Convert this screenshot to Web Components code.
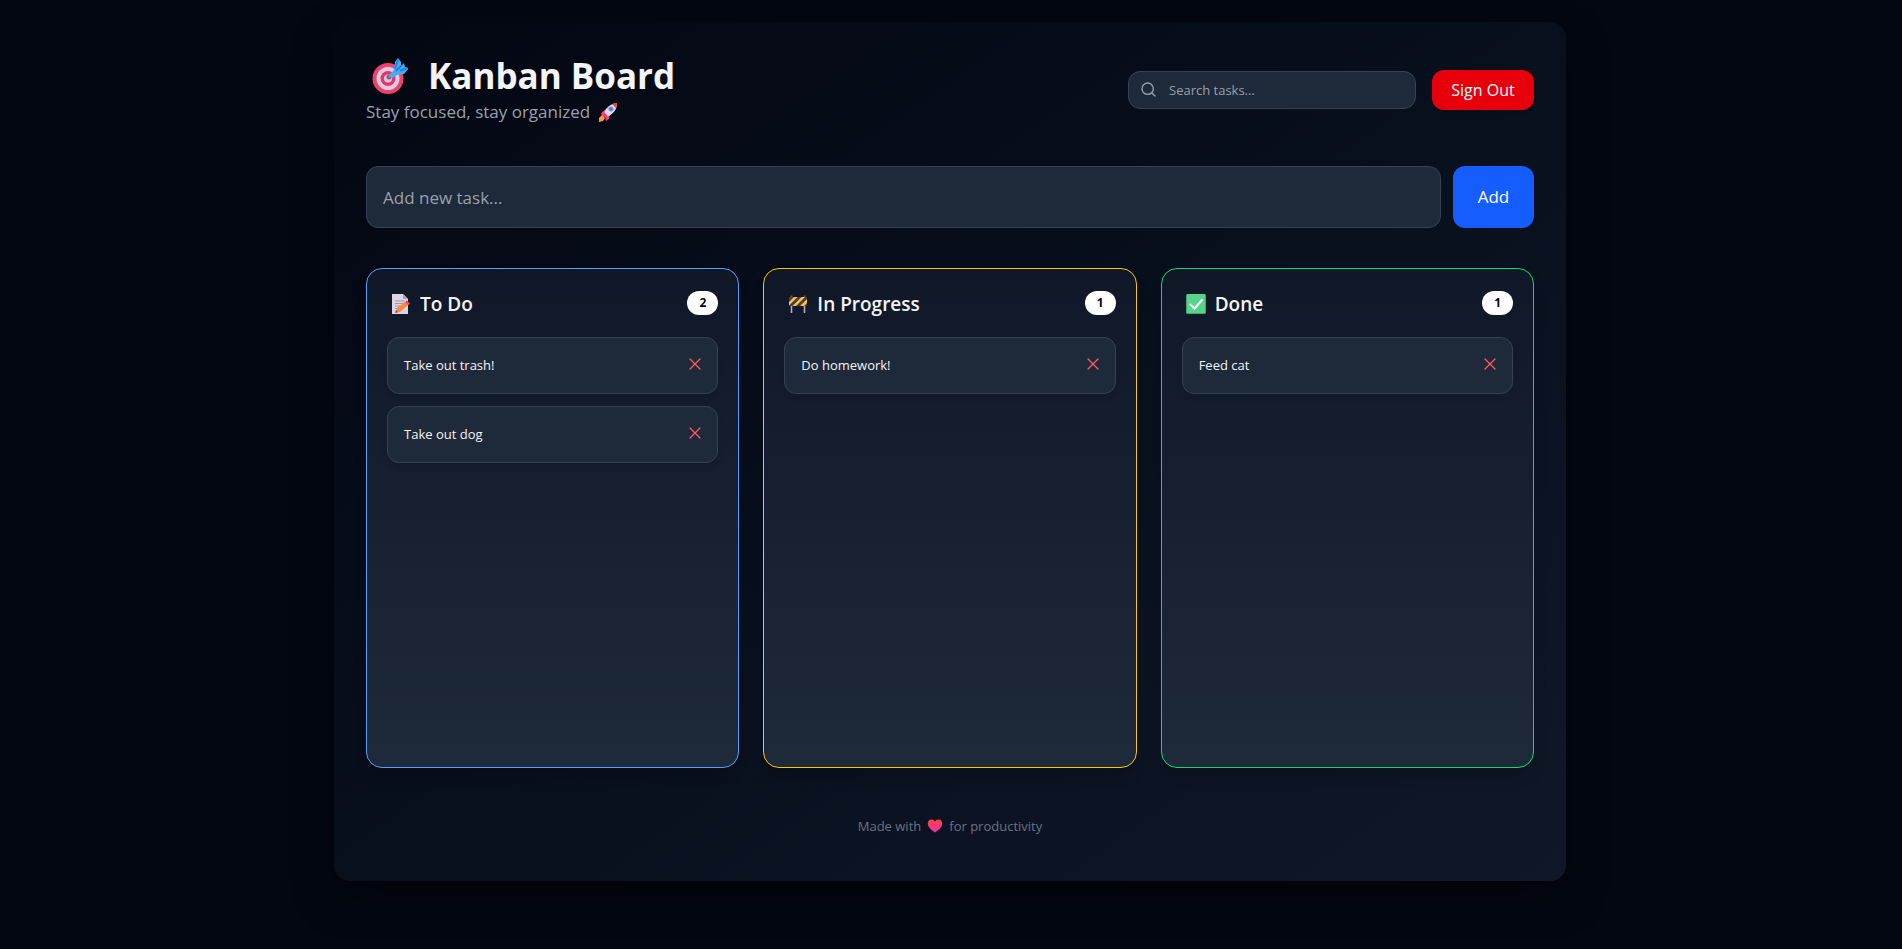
<!DOCTYPE html>
<html lang="en">
<head>
<meta charset="utf-8">
<meta name="viewport" content="width=device-width, initial-scale=1">
<title>Kanban Board</title>
<style>
html { background: #030712; }
body { margin: 0; padding: 22px 26px 68px 24px; font-family: "Open Sans", "Noto Sans", sans-serif; color: #f3f4f6; overflow-x: hidden; }
</style>
</head>
<body>
<kanban-app></kanban-app>
<script>
const icons = {
  target: `<svg viewBox="0 0 36 36"><circle cx="16" cy="20.500" r="15.500" fill="#f0406c"/><circle cx="16" cy="20.500" r="11.500" fill="#dccbe4"/><circle cx="16" cy="20.500" r="7.500" fill="#e83467"/><circle cx="16" cy="20.500" r="4" fill="#d8c9e2"/><circle cx="17" cy="19" r="2.500" fill="#7c6684"/><path d="M17 19 26 11" stroke="#8a9bb8" stroke-width="2"/><path d="M17 17l5-5 1-8 3-4 3 4v4l3-3 1 4 4 1-5 6-7 1-5 3z" fill="#42adf2"/><path d="M23 11l3-9M28 13l7-3" stroke="#2a82de" stroke-width="2" fill="none"/><path d="M24 13l6-6" stroke="#1f6fd0" stroke-width="1.500" fill="none"/></svg>`,
  rocket: `<svg viewBox="0 0 20 20"><path d="M3 11 8 7l4 4-1 6-3 2-1-4-3-1z" fill="#ef4283"/><path d="M6 12C7 6 12 2 19 1c0 7-4 11-10 14z" fill="#e6dced"/><path d="M14 2c2-.8 4-1 5-1 0 1-.2 3-1 5z" fill="#f03d52"/><circle cx="13" cy="7" r="2.300" fill="#3f86e6" stroke="#a99cb8" stroke-width=".8"/><path d="M5 11l4 4" stroke="#f03d78" stroke-width="2.500"/><path d="M1 16l3-3 3 3-2 3-4 1z" fill="#ff9a34"/></svg>`,
  memo: `<svg viewBox="0 0 20 20"><path d="M1 0h11l5 5v15H1z" fill="#ddd4e5"/><path d="M12 0l5 5h-5z" fill="#a99fb8"/><path d="M4 7h10M4 9.500h10M4 12h8M4 14.500h4" stroke="#9f96ad" stroke-width="1"/><path d="M5 18l1-4 8-6 3 3-8 7-4 1z" fill="#ff8a3c"/><path d="M14 8l2-1.500 3 3-2 2z" fill="#f9484f"/><path d="M4 19l1-3 2 2z" fill="#7d5a55"/></svg>`,
  barrier: `<svg viewBox="0 0 20 20"><path d="M3.500 11v8M16.500 11v8" stroke="#b9a8c6" stroke-width="1.600"/><path d="M1 3h18v9H1z" fill="#4a3b4c"/><path d="M1 8l5-5h3.500L1 11.500zM4.500 12l9-9H17l-9 9zM12 12l7-7v4l-3 3z" fill="#fcc43c"/><path d="M3.500 1.500v1.500M16.500 1.500v1.500" stroke="#8c3a5c" stroke-width="2"/></svg>`,
  check: `<svg viewBox="0 0 20 20"><rect width="20" height="20" rx="1.500" fill="#3fa56f"/><rect x="1" y="0" width="18" height="19" rx="1" fill="#57d38c"/><path d="M4.500 10.500 8.500 14.500 16 6" fill="none" stroke="#fff" stroke-width="2" stroke-linecap="round"/></svg>`,
  heart: `<svg viewBox="0 0 16 14"><defs><linearGradient id="h" x2="0" y2="1"><stop stop-color="#fb4247"/><stop offset="1" stop-color="#f22fa6"/></linearGradient></defs><path d="M8 13.500C3 10 .8 7.500.8 4.500.8 2 2.500.6 4.500.6 6 .6 7.300 1.300 8 2.600 8.700 1.300 10 .6 11.500.6c2 0 3.700 1.400 3.700 3.900 0 3-2.200 5.500-7.200 9z" fill="url(#h)"/></svg>`,
  search: `<svg viewBox="0 0 24 24" fill="none" stroke="#99a1af" stroke-width="2" stroke-linecap="round" stroke-linejoin="round"><circle cx="10" cy="10" r="8.500"/><path d="m21 21-4.500-4.500"/></svg>`,
  close: `<svg viewBox="0 0 12 12" stroke="#ff5b60" stroke-width="1.300" stroke-linecap="round"><path d="M1 1l10 10M11 1 1 11"/></svg>`
};
const base = `*{box-sizing:border-box;margin:0}svg{display:block;width:100%;height:100%}button,input{font-family:inherit}button{cursor:pointer;border:0}input::placeholder{color:#99a1af;opacity:1}`;

class Base extends HTMLElement {
  connectedCallback() {
    if (this.shadowRoot) return;
    this.attachShadow({ mode: "open" }).innerHTML = `<style>${base}${this.styles()}</style>${this.markup()}`;
  }
}

customElements.define("emoji-icon", class extends Base {
  styles() { return `:host{display:inline-block;flex:none}`; }
  markup() { return icons[this.getAttribute("name")]; }
});

customElements.define("board-header", class extends Base {
  styles() { return `
    :host{display:block}
    header{display:flex;align-items:center;justify-content:space-between;gap:24px;flex-wrap:wrap}
    h1{display:flex;align-items:center;font-size:35px;line-height:40px;font-weight:700;color:#f3f4f6;padding:2px 0 0 6px;gap:20px}
    h1 emoji-icon{width:36px;height:36px}
    p{display:flex;align-items:center;gap:8px;margin-top:2px;font-size:17px;line-height:28px;color:#99a1af}
    p emoji-icon{width:20px;height:20px}
    .actions{display:flex;align-items:center;gap:16px}
    label{display:flex;align-items:center;gap:12px;width:288px;height:38px;padding:0 12px;border:1px solid #364153;border-radius:12px;background:#1e2939}
    label svg{width:16px;height:16px;flex:none}
    input{flex:1;min-width:0;border:0;outline:0;padding:0;background:none;color:#fff;font-size:13px;line-height:20px}
    button{width:102px;height:40px;padding:0;border-radius:12px;background:#e7000b;color:#fff;font-size:16px;line-height:24px;box-shadow:0 1px 3px #0003}`; }
  markup() { return `<header><div><h1><emoji-icon name="target"></emoji-icon><span>Kanban Board</span></h1>
    <p><span>Stay focused, stay organized</span><emoji-icon name="rocket"></emoji-icon></p></div>
    <div class="actions"><label>${icons.search}<input type="text" aria-label="Search tasks" placeholder="Search tasks..."></label>
    <button type="button">Sign Out</button></div></header>`; }
});

customElements.define("task-form", class extends Base {
  styles() { return `
    :host{display:block}
    form{display:flex;gap:12px}
    input{flex:1;min-width:0;height:62px;padding:0 16px;border:1px solid #364153;border-radius:12px;background:#1e2939;color:#fff;font-size:17px;line-height:28px;outline:0}
    button{width:81px;padding:0;border-radius:12px;background:#155dfc;color:#fff;font-size:17px;line-height:28px;box-shadow:0 1px 3px #0003}`; }
  markup() { return `<form><input type="text" aria-label="New task" placeholder="Add new task..."><button type="button">Add</button></form>`; }
});

customElements.define("task-card", class extends Base {
  styles() { return `
    :host{display:flex;align-items:center;justify-content:space-between;height:57px;padding:0 16px 2px;border:1px solid #364153;border-radius:12px;background:#1e2939;color:#f3f4f6;font-size:13px;line-height:20px;box-shadow:0 4px 6px -1px #0002}
    button{width:12px;height:14px;padding:0 0 2px;background:none}`; }
  markup() { return `<span><slot></slot></span><button type="button" aria-label="Delete">${icons.close}</button>`; }
});

customElements.define("board-column", class extends Base {
  styles() { return `
    :host{display:flex;flex-direction:column;gap:20px;min-width:0;min-height:500px;padding:20px;border:1px solid var(--accent);border-radius:16px;background:linear-gradient(#101828,#1e2939);box-shadow:0 10px 15px -3px #0003}
    .head{display:flex;align-items:center;justify-content:space-between;height:28px}
    h2{display:flex;align-items:center;gap:9px;padding:2px 0 0 4px;font-size:19px;line-height:28px;font-weight:600;color:#f3f4f6}
    h2 emoji-icon{width:20px;height:20px}
    .count{padding:0 12px;border-radius:12px;background:#fff;color:#030712;font-size:12px;line-height:24px;font-weight:700}
    .list{display:flex;flex-direction:column;gap:12px}`; }
  markup() { return `<div class="head"><h2><emoji-icon name="${this.getAttribute("icon")}"></emoji-icon><span>${this.getAttribute("heading")}</span></h2><span class="count">${this.children.length}</span></div><div class="list"><slot></slot></div>`; }
});

customElements.define("kanban-app", class extends Base {
  styles() { return `
    :host{display:block;max-width:1232px;margin:0 auto}
    main{display:flex;flex-direction:column;gap:40px;padding:32px 32px 45px;border-radius:16px;background:linear-gradient(to bottom right in oklab,#030712,#101828);box-shadow:0 16px 40px -4px #0008}
    .columns{display:grid;grid-template-columns:repeat(auto-fit,minmax(280px,1fr));gap:24px}
    board-column:nth-child(1){--accent:#51a2ff}
    board-column:nth-child(2){--accent:#fdc700}
    board-column:nth-child(3){--accent:#05df72}
    footer{display:flex;align-items:center;justify-content:center;gap:6px;margin-top:8px;font-size:13px;line-height:20px;color:#6a7282}
    footer emoji-icon{width:16px;height:14px}`; }
  markup() { return `<main><board-header></board-header><task-form></task-form>
    <section class="columns">
      <board-column icon="memo" heading="To Do"><task-card>Take out trash!</task-card><task-card>Take out dog</task-card></board-column>
      <board-column icon="barrier" heading="In Progress"><task-card>Do homework!</task-card></board-column>
      <board-column icon="check" heading="Done"><task-card>Feed cat</task-card></board-column>
    </section>
    <footer><span>Made with</span><emoji-icon name="heart"></emoji-icon><span>for productivity</span></footer></main>`; }
});
</script>
</body>
</html>
